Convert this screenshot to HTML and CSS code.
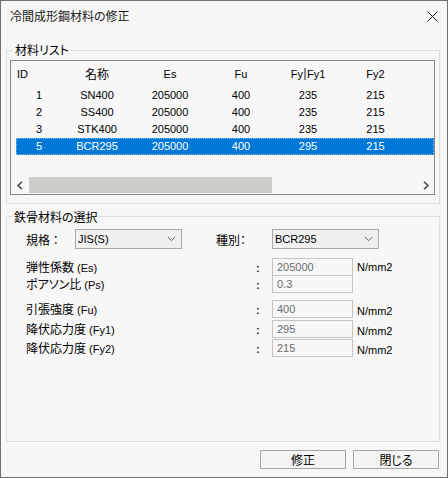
FILE: index.html
```html
<!DOCTYPE html>
<html lang="ja">
<head>
<meta charset="utf-8">
<title>冷間成形鋼材料の修正</title>
<link rel="stylesheet" href="styles.css">
</head>
<body>
<div class="window">
  <div class="titlebar">
    <span class="title j">冷間成形鋼材料の修正</span>
    <svg class="close" width="11" height="11" viewBox="0 0 11 11"><path d="M0.5 0.5 L10.5 10.5 M10.5 0.5 L0.5 10.5" stroke="#1a1a1a" stroke-width="1" fill="none"/></svg>
  </div>

  <div class="group g1">
    <span class="legend j">材料リスト</span>
    <div class="listview">
      <div class="lv-row lv-head">
        <span class="c cid">ID</span>
        <span class="c j">名称</span>
        <span class="c">Es</span>
        <span class="c">Fu</span>
        <span class="c">Fy<span class="bar"></span>Fy1</span>
        <span class="c">Fy2</span>
      </div>
      <div class="lv-row"><span class="c">1</span><span class="c">SN400</span><span class="c">205000</span><span class="c">400</span><span class="c">235</span><span class="c">215</span></div>
      <div class="lv-row"><span class="c">2</span><span class="c">SS400</span><span class="c">205000</span><span class="c">400</span><span class="c">235</span><span class="c">215</span></div>
      <div class="lv-row"><span class="c">3</span><span class="c">STK400</span><span class="c">205000</span><span class="c">400</span><span class="c">235</span><span class="c">215</span></div>
      <div class="lv-row selected"><span class="c">5</span><span class="c">BCR295</span><span class="c">205000</span><span class="c">400</span><span class="c">295</span><span class="c">215</span></div>
      <div class="lv-spacer"></div>
      <div class="hscroll">
        <span class="sb-btn"><svg width="8" height="9" viewBox="0 0 8 9"><path d="M6 0.8 L2 4.5 L6 8.2" stroke="#505050" stroke-width="1.6" fill="none"/></svg></span>
        <span class="sb-track"><span class="sb-thumb"></span></span>
        <span class="sb-btn"><svg width="8" height="9" viewBox="0 0 8 9"><path d="M2 0.8 L6 4.5 L2 8.2" stroke="#505050" stroke-width="1.6" fill="none"/></svg></span>
      </div>
    </div>
  </div>

  <div class="group g2">
    <span class="legend j">鉄骨材料の選択</span>
    <div class="top-row">
      <span class="lbl-kikaku"><span class="j">規格 ：</span></span>
      <span class="select"><span class="sel-text">JIS(S)</span><svg class="chev" width="9" height="6" viewBox="0 0 9 6"><path d="M0.8 1 L4.5 4.6 L8.2 1" stroke="#606060" stroke-width="1" fill="none"/></svg></span>
      <span class="lbl-shubetsu"><span class="j">種別：</span></span>
      <span class="select"><span class="sel-text">BCR295</span><svg class="chev" width="9" height="6" viewBox="0 0 9 6"><path d="M0.8 1 L4.5 4.6 L8.2 1" stroke="#606060" stroke-width="1" fill="none"/></svg></span>
    </div>

    <div class="frow r1">
      <span class="flabel"><span class="j">弾性係数</span> (Es)</span>
      <span class="colon">:</span>
      <span class="input">205000</span>
      <span class="unit">N/mm2</span>
    </div>
    <div class="frow r2">
      <span class="flabel"><span class="j">ポアソン比</span> (Ps)</span>
      <span class="colon">:</span>
      <span class="input">0.3</span>
      <span class="unit"></span>
    </div>
    <div class="frow r3">
      <span class="flabel"><span class="j">引張強度</span> (Fu)</span>
      <span class="colon">:</span>
      <span class="input">400</span>
      <span class="unit low">N/mm2</span>
    </div>
    <div class="frow r4">
      <span class="flabel"><span class="j">降伏応力度</span> (Fy1)</span>
      <span class="colon">:</span>
      <span class="input">295</span>
      <span class="unit low">N/mm2</span>
    </div>
    <div class="frow r5">
      <span class="flabel"><span class="j">降伏応力度</span> (Fy2)</span>
      <span class="colon">:</span>
      <span class="input">215</span>
      <span class="unit low">N/mm2</span>
    </div>
  </div>

  <div class="buttons">
    <span class="btn j">修正</span>
    <span class="btn j">閉じる</span>
  </div>
</div>
</body>
</html>
```

FILE: styles.css
```css
html, body {
  margin: 0;
  padding: 0;
  background: #f7f7f7;
}

body {
  font-family: "Liberation Sans", "Noto Sans CJK JP", sans-serif;
  font-size: 11px;
  color: #000;
}

.j {
  font-family: "Noto Sans CJK JP", sans-serif;
  font-size: 12px;
  font-feature-settings: "palt";
}

.window {
  width: 448px;
  height: 478px;
  box-sizing: border-box;
  border: 1px solid #707070;
  background: #f7f7f7;
  display: flex;
  flex-direction: column;
}

.titlebar {
  height: 30px;
  display: flex;
  align-items: center;
  justify-content: space-between;
  padding: 0 9px 0 9px;
  flex: none;
}

.title {
  line-height: 14px;
  color: #1a1a1a;
}

.close {
  display: block;
  margin-top: 1px;
}

.group {
  position: relative;
  box-sizing: border-box;
  border: 1px solid #dcdedb;
  margin: 0 7px 0 5px;
  flex: none;
}

.legend {
  position: absolute;
  left: 6px;
  top: -8px;
  line-height: 14px;
  padding: 0 2px;
  background: #f7f7f7;
  color: #000;
}

.g1 {
  margin-top: 19px;
  height: 154px;
  padding: 9px 4px 8px 3px;
}

.listview {
  box-sizing: border-box;
  height: 135px;
  border: 1px solid #858585;
  background: #f7f7f7;
  display: flex;
  flex-direction: column;
}

.lv-row {
  display: grid;
  grid-template-columns: 46px 70px 76px 66px 68px 67px 1fr;
  height: 17px;
  align-items: center;
  margin-left: 5px;
  line-height: 17px;
  flex: none;
}

.lv-head {
  height: 26px;
  line-height: 26px;
}

.c {
  text-align: center;
  white-space: nowrap;
}

.cid {
  text-align: left;
  padding-left: 1px;
}

.bar {
  display: inline-block;
  width: 2px;
  height: 12px;
  background: #8a8a8a;
  vertical-align: -2px;
  margin: 0 1px;
}

.selected {
  background: #0078d7;
  color: #fff;
  outline: 1px dotted #7fbdf0;
  outline-offset: -1px;
}

.lv-spacer {
  flex: 1;
}

.hscroll {
  height: 17px;
  display: flex;
  flex: none;
}

.sb-btn {
  width: 17px;
  height: 16px;
  display: flex;
  align-items: center;
  justify-content: center;
}

.sb-track {
  flex: 1;
  display: flex;
}

.sb-thumb {
  width: 243px;
  height: 16px;
  margin-left: 1px;
  background: #cfcdc8;
}

.g2 {
  margin-top: 12px;
  height: 226px;
  padding: 0 0 0 19px;
}

.g2 .legend {
  left: 5px;
  top: -7px;
}

.top-row {
  margin-top: 12px;
  height: 20px;
  display: flex;
  align-items: center;
}

.lbl-kikaku {
  width: 49px;
}

.lbl-shubetsu {
  width: 56px;
  margin-left: 34px;
}

.select {
  box-sizing: border-box;
  width: 107px;
  height: 20px;
  border: 1px solid #a9a9a9;
  background: #f0f0f0;
  display: flex;
  align-items: center;
  justify-content: space-between;
  padding: 0 5px 0 2px;
}

.sel-text {
  line-height: 18px;
}

.chev {
  display: block;
}

.frow {
  display: grid;
  grid-template-columns: 230px 16px 81px auto;
  height: 18px;
  align-items: center;
}

.r1 { margin-top: 7px; }
.r2 { margin-top: 0; }
.r3 { margin-top: 6px; }
.r4 { margin-top: 2px; }
.r5 { margin-top: 1px; }

.flabel {
  white-space: nowrap;
  line-height: 18px;
}

.r1 .flabel { padding-top: 2px; }

.colon {
  line-height: 18px;
  padding-top: 2px;
  font-weight: bold;
  color: #222;
}

.input {
  box-sizing: border-box;
  height: 18px;
  border: 1px solid #c4c4c4;
  background: #f7f7f7;
  color: #6d6d6d;
  line-height: 16px;
  padding-left: 4px;
}

.unit {
  margin-left: 4px;
  line-height: 18px;
}

.unit.low {
  padding-top: 4px;
}

.buttons {
  display: flex;
  justify-content: flex-end;
  gap: 7px;
  margin-top: 8px;
  padding-right: 8px;
  flex: none;
}

.btn {
  box-sizing: border-box;
  width: 86px;
  height: 19px;
  border: 1px solid #a6a6a6;
  background: #f4f4f4;
  text-align: center;
  line-height: 17px;
  color: #000;
}
```
